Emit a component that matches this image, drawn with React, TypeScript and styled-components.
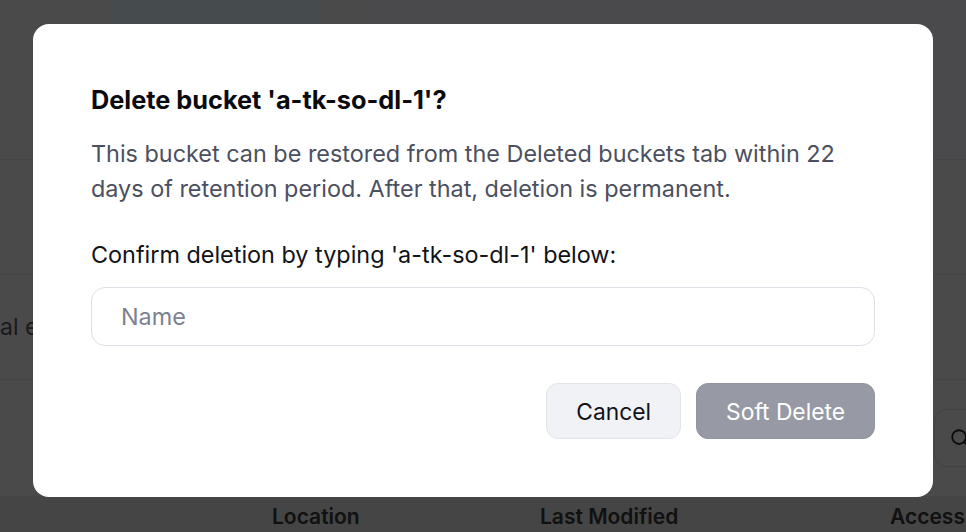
import React from "react";
import styled, { createGlobalStyle } from "styled-components";

const GlobalStyle = createGlobalStyle`
  html, body {
    margin: 0;
    padding: 0;
    height: 100%;
    overflow: hidden;
  }
  body {
    font-family: Inter, "Liberation Sans", sans-serif;
    background: #d3d3d3;
  }
  * {
    box-sizing: border-box;
  }
`;

const Page = styled.div`
  width: 966px;
  height: 532px;
  display: flex;
  flex-direction: column;
  background: #d3d3d3;
  overflow: hidden;
`;

const TopArea = styled.div`
  height: 160px;
  display: flex;
  gap: 45px;
  padding-left: 110px;
  border-bottom: 1px solid #c7c7c7;
`;

const Tab = styled.div`
  width: 210px;
  height: 30px;
  background: #c8d6dc;
  border-radius: 0 0 14px 14px;
`;

const Panel = styled.div`
  flex: 1;
  background: #d3d1d9;
  border-radius: 14px 0 0 0;
`;

const Row = styled.div<{ $h: number }>`
  height: ${({ $h }) => $h}px;
  display: flex;
  align-items: center;
  justify-content: space-between;
  border-bottom: 1px solid #c7c7c7;
  font-size: 23px;
  color: #4a4a4a;
`;

const CellText = styled.span`
  white-space: nowrap;
`;

const SearchBox = styled.div`
  width: 60px;
  height: 58px;
  margin-left: auto;
  margin-right: -28px;
  border: 1px solid #bdbdbd;
  border-radius: 12px;
  display: flex;
  align-items: center;
  padding-left: 14px;
  color: #222;
`;

const HeaderRow = styled.div`
  flex: 1;
  display: flex;
  align-items: flex-end;
  padding-bottom: 3px;
  background: #c5c5c5;
  font-size: 21px;
  font-weight: 600;
  color: #313131;
`;

const HeaderCell = styled.span<{ $w: number }>`
  width: ${({ $w }) => $w}px;
  flex: none;
  white-space: nowrap;
`;

const Overlay = styled.div`
  position: fixed;
  inset: 0;
  background: rgba(0, 0, 0, 0.65);
  display: flex;
  justify-content: center;
  align-items: flex-start;
  padding-top: 24px;
`;

const Modal = styled.div`
  width: 900px;
  background: #ffffff;
  border-radius: 16px;
  padding: 58px;
  display: flex;
  flex-direction: column;
`;

const Title = styled.h2`
  margin: 0;
  font-size: 25.3px;
  line-height: 36px;
  font-weight: 700;
  color: #0b0b0f;
`;

const Body = styled.p`
  margin: 18px 0 0;
  font-size: 23.4px;
  line-height: 35px;
  color: #4b5060;
`;

const Label = styled.label`
  margin-top: 34px;
  font-size: 23.4px;
  line-height: 30px;
  color: #111318;
`;

const Input = styled.input`
  margin-top: 17px;
  height: 59px;
  width: 100%;
  border: 1px solid #dfe1e8;
  border-radius: 14px;
  padding: 0 29px;
  font-family: Inter, "Liberation Sans", sans-serif;
  font-size: 23.4px;
  color: #111;
  outline: none;

  &::placeholder {
    color: #7d8192;
  }
`;

const Actions = styled.div`
  margin-top: 37px;
  display: flex;
  justify-content: flex-end;
  gap: 15px;
`;

const Button = styled.button<{ $primary?: boolean }>`
  height: 56px;
  padding: 0 29px;
  border-radius: 12px;
  font-family: Inter, "Liberation Sans", sans-serif;
  font-size: 22.8px;
  cursor: pointer;
  border: 1px solid ${({ $primary }) => ($primary ? "#9195a0" : "#e2e4ea")};
  background: ${({ $primary }) => ($primary ? "#979aa5" : "#f1f2f6")};
  color: ${({ $primary }) => ($primary ? "#ffffff" : "#111318")};
`;

const SearchIcon = () => (
  <svg width="22" height="22" viewBox="0 0 24 24" fill="none" stroke="currentColor" strokeWidth="2" strokeLinecap="round">
    <circle cx="11" cy="11" r="7.5" />
    <path d="M16.5 16.5L21 21" />
  </svg>
);

export default function App() {
  return (
    <>
      <GlobalStyle />
      <Page>
        <TopArea>
          <Tab />
          <Panel />
        </TopArea>
        <Row $h={115} />
        <Row $h={105}>
          <CellText>al endpoint</CellText>
        </Row>
        <Row $h={117}>
          <SearchBox>
            <SearchIcon />
          </SearchBox>
        </Row>
        <HeaderRow>
          <HeaderCell $w={272} />
          <HeaderCell $w={268}>Location</HeaderCell>
          <HeaderCell $w={350}>Last Modified</HeaderCell>
          <HeaderCell $w={100}>Access</HeaderCell>
        </HeaderRow>
      </Page>
      <Overlay>
        <Modal role="dialog" aria-modal="true">
          <Title>Delete bucket 'a-tk-so-dl-1'?</Title>
          <Body>
            This bucket can be restored from the Deleted buckets tab within 22 days of retention period. After that,
            deletion is permanent.
          </Body>
          <Label htmlFor="confirm-name">Confirm deletion by typing 'a-tk-so-dl-1' below:</Label>
          <Input id="confirm-name" placeholder="Name" />
          <Actions>
            <Button type="button">Cancel</Button>
            <Button type="button" $primary>
              Soft Delete
            </Button>
          </Actions>
        </Modal>
      </Overlay>
    </>
  );
}
